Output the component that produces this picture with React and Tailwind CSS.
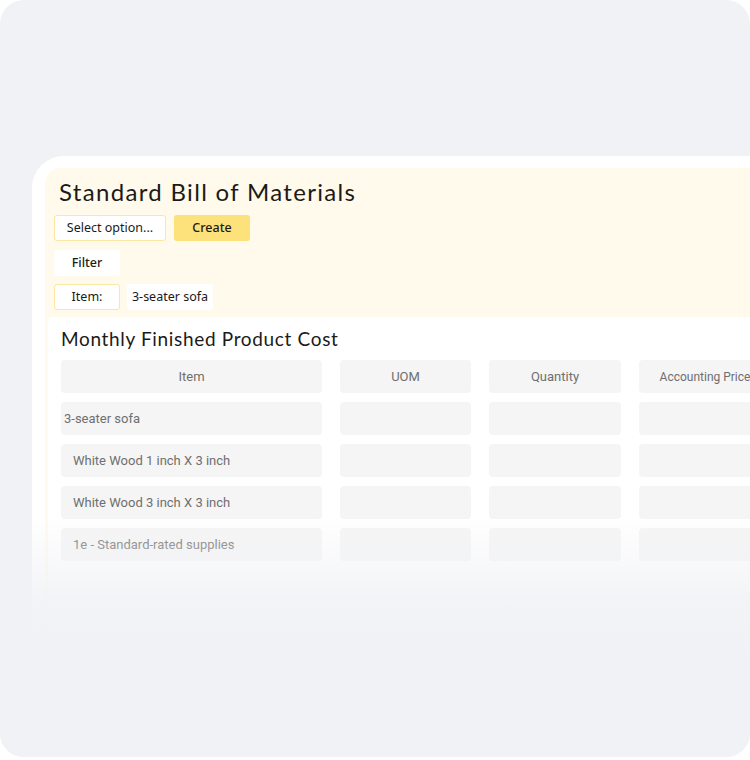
const columns = ['Item', 'UOM', 'Quantity', 'Accounting Price']

const rows = [
  { name: '3-seater sofa', pad: 'pl-[3px]' },
  { name: 'White Wood 1 inch X 3 inch', pad: 'pl-[12px]' },
  { name: 'White Wood 3 inch X 3 inch', pad: 'pl-[12px]' },
  { name: '1e - Standard-rated supplies', pad: 'pl-[12px]' },
]

const App = () => {
  return (
    <div className="bg-white h-[760px] w-[750px]">
      <div className="relative h-[757px] w-[750px] overflow-hidden rounded-[24px] bg-[#f1f2f5] pt-[156px] pl-[32px]">
        {/* Card */}
        <div className="w-[760px] rounded-tl-[32px] bg-white pt-[12px] pl-[13px]">
          <div className="rounded-tl-[16px] bg-[#fffaeb] pt-[8px] pl-[3px]">
            {/* Header */}
            <div className="pl-[6px] font-['Lato',sans-serif]">
              <h1 className="ml-[5px] h-[32px] text-[24px] leading-[32px] tracking-[0.055em] text-[#1c1a17]">
                Standard Bill of Materials
              </h1>
              <div className="mt-[7px] flex gap-[8px] font-['Noto_Sans',sans-serif] text-[12.5px] text-[#1c1a17]">
                <button className="h-[26px] w-[112px] rounded-[3px] border border-[#fbe6a2] bg-white">
                  Select option...
                </button>
                <button className="h-[26px] w-[76px] rounded-[3px] bg-[#fde17a] font-medium">
                  Create
                </button>
              </div>
              <div className="mt-[9px] font-['Noto_Sans',sans-serif] text-[12.5px] font-medium text-[#1c1a17]">
                <div className="flex h-[26px] w-[66px] items-center justify-center rounded-[3px] bg-white">
                  Filter
                </div>
              </div>
              <div className="mt-[8px] flex gap-[7px] font-['Noto_Sans',sans-serif] text-[12.5px] text-[#1c1a17]">
                <div className="flex h-[26px] w-[66px] items-center justify-center rounded-[3px] border border-[#fbe6a2] bg-white">
                  Item:
                </div>
                <div className="flex h-[26px] w-[86px] items-center justify-center rounded-[3px] bg-white">
                  3-seater sofa
                </div>
              </div>
            </div>

            {/* Table panel */}
            <div className="mt-[7px] h-[400px] rounded-tl-[4px] bg-white pt-[9px] pl-[13px]">
              <h2 className="h-[26px] font-['Lato',sans-serif] text-[19px] leading-[26px] tracking-[0.035em] text-[#1c1a17]">
                Monthly Finished Product Cost
              </h2>
              <div className="mt-[8px] grid grid-cols-[261px_131px_132px_132px] gap-x-[18px] gap-y-[9px] font-['Roboto',sans-serif] text-[13px] text-[#6f6f6f]">
                {columns.map((col, i) => (
                  <div
                    key={col}
                    className={`flex h-[33px] items-center justify-center whitespace-nowrap rounded-[4px] bg-[#f5f5f5] ${
                      i === 3 ? 'text-[12px]' : ''
                    }`}
                  >
                    {col}
                  </div>
                ))}
                {rows.map((row) => (
                  <div key={row.name} className="contents">
                    <div className={`flex h-[33px] items-center rounded-[4px] bg-[#f5f5f5] ${row.pad}`}>
                      {row.name}
                    </div>
                    <div className="h-[33px] rounded-[4px] bg-[#f5f5f5]" />
                    <div className="h-[33px] rounded-[4px] bg-[#f5f5f5]" />
                    <div className="h-[33px] rounded-[4px] bg-[#f5f5f5]" />
                  </div>
                ))}
              </div>
            </div>
          </div>
        </div>

        {/* Bottom fade */}
        <div className="pointer-events-none absolute inset-x-0 top-[515px] h-[150px] bg-gradient-to-b from-[#f1f2f500] via-[#f1f2f5e6] via-60% to-[#f1f2f5]" />
        <div className="absolute inset-x-0 top-[665px] bottom-0 bg-[#f1f2f5]" />
      </div>
    </div>
  )
}

export default App
